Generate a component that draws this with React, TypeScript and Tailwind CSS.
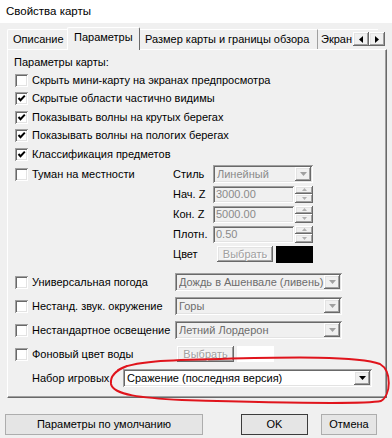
import React from 'react';

const sunken =
  'shadow-[inset_1px_1px_0_#a0a0a0,inset_-1px_-1px_0_#ffffff,inset_2px_2px_0_#696969,inset_-2px_-2px_0_#e3e3e3]';
const raised =
  'shadow-[inset_-1px_-1px_0_#696969,inset_1px_1px_0_#ffffff,inset_-2px_-2px_0_#a0a0a0,inset_2px_2px_0_#e3e3e3]';

function Check({ checked }: { checked?: boolean }) {
  return (
    <div className={`w-[13px] h-[13px] shrink-0 bg-white flex items-center justify-center ${sunken}`}>
      {checked && (
        <svg width="13" height="13" viewBox="0 0 13 13">
          <path d="M3.5 6 L5.5 8.2 L9.8 3.6" fill="none" stroke="#000" strokeWidth="2" />
        </svg>
      )}
    </div>
  );
}

function CheckRow({ label, checked, h }: { label: string; checked?: boolean; h: string }) {
  return (
    <div className={`flex items-center gap-[4px] ${h}`}>
      <Check checked={checked} />
      <span className="whitespace-nowrap">{label}</span>
    </div>
  );
}

function Arrow({ dir = 'down', color = '#a0a0a0' }: { dir?: 'down' | 'up' | 'left' | 'right'; color?: string }) {
  const pts = {
    down: '0,0 7,0 3.5,4',
    up: '0,4 7,4 3.5,0',
    left: '4,0 4,7 0,3.5',
    right: '0,0 0,7 4,3.5',
  }[dir];
  const vertical = dir === 'down' || dir === 'up';
  return (
    <svg width={vertical ? 7 : 4} height={vertical ? 4 : 7} viewBox={vertical ? '0 0 7 4' : '0 0 4 7'}>
      <polygon points={pts} fill={color} />
    </svg>
  );
}

function Combo({ text, className, enabled }: { text: string; className: string; enabled?: boolean }) {
  return (
    <div
      className={`flex items-center h-[18px] pl-[4px] pr-[2px] ${enabled ? 'bg-white text-black' : 'bg-[#f0f0f0] text-[#6d6d6d]'} ${sunken} ${className}`}
    >
      <span className="flex-1 whitespace-nowrap overflow-hidden">{text}</span>
      <div className={`w-[16px] h-[14px] bg-[#f0f0f0] flex items-center justify-center ${raised}`}>
        <Arrow color={enabled ? '#000' : '#a0a0a0'} />
      </div>
    </div>
  );
}

function SpinField({ value }: { value: string }) {
  return (
    <div className="flex items-center">
      <div className={`w-[81px] h-[17px] flex items-center pl-[3px] text-[#8a8a8a] ${sunken}`}>{value}</div>
      <div className="ml-[1px] w-[18px] h-[17px] flex flex-col">
        <div className={`h-[8.5px] flex items-center justify-center ${raised}`}>
          <svg width="5" height="3" viewBox="0 0 5 3">
            <polygon points="0,3 5,3 2.5,0" fill="#b0b0b0" />
          </svg>
        </div>
        <div className={`h-[8.5px] flex items-center justify-center ${raised}`}>
          <svg width="5" height="3" viewBox="0 0 5 3">
            <polygon points="0,0 5,0 2.5,3" fill="#b0b0b0" />
          </svg>
        </div>
      </div>
    </div>
  );
}

function DisabledButton({ className }: { className: string }) {
  return (
    <div
      className={`h-[16px] flex items-center justify-center text-[#a0a0a0] [text-shadow:1px_1px_0_#ffffff] ${raised} ${className}`}
    >
      Выбрать
    </div>
  );
}

function Button({ label, className, def }: { label: string; className: string; def?: boolean }) {
  return (
    <div
      className={`h-[21px] flex items-center justify-center bg-[#e5e5e5] ${def ? 'border border-[#3c3c3c]' : 'border border-[#adadad]'} ${className}`}
    >
      {label}
    </div>
  );
}

const fogRows = [
  { label: 'Стиль', kind: 'combo' },
  { label: 'Нач. Z', kind: 'spin', value: '3000.00' },
  { label: 'Кон. Z', kind: 'spin', value: '5000.00' },
  { label: 'Плотн.', kind: 'spin', value: '0.50' },
  { label: 'Цвет', kind: 'color' },
];

const optionRows = [
  { label: 'Универсальная погода', control: 'Дождь в Ашенвале (ливень)' },
  { label: 'Нестанд. звук. окружение', control: 'Горы' },
  { label: 'Нестандартное освещение', control: 'Летний Лордерон' },
];

export default function App() {
  return (
    <div className="relative w-[392px] h-[438px] overflow-hidden bg-[#f0f0f0] text-[11px] leading-none text-black font-['Liberation_Sans',Arial,sans-serif]">
      {/* Title */}
      <div className="h-[23px] bg-white flex items-center pl-[6px] text-[11.5px]">Свойства карты</div>

      {/* Tabs */}
      <div className="relative pl-[7px] pt-[4px] flex items-end h-[26px] whitespace-nowrap">
        <div className="w-[61px] h-[20px] flex items-center pl-[5px] border-l border-t border-white border-r border-r-[#a0a0a0] rounded-tl-[2px]">
          Описание
        </div>
        <div className="relative z-10 -mb-px -ml-[1px] w-[73px] h-[23px] pb-[3px] flex items-center pl-[6px] bg-[#f0f0f0] border-l border-t border-white border-r border-r-[#696969] rounded-t-[2px]">
          Параметры
        </div>
        <div className="w-[178px] h-[20px] flex items-center pl-[5px] border-t border-white border-r border-r-[#a0a0a0]">
          Размер карты и границы обзора
        </div>
        <div className="w-[60px] h-[20px] flex items-center pl-[3px] border-t border-white">
          Экран
        </div>
        <div className="absolute left-[353px] top-[9px] flex">
          <div className={`w-[16px] h-[14px] bg-[#f0f0f0] flex items-center justify-center ${raised}`}>
            <Arrow dir="left" color="#000" />
          </div>
          <div className={`w-[16px] h-[14px] bg-[#f0f0f0] flex items-center justify-center ${raised}`}>
            <Arrow dir="right" color="#000" />
          </div>
        </div>
      </div>

      {/* Panel */}
      <div className="ml-[7px] w-[380px] h-[349px] border-l border-t border-white border-r border-b border-r-[#696969] border-b-[#696969] shadow-[inset_-1px_-1px_0_#a0a0a0] pl-[7px]">
        <div className="mt-[4px] h-[17px] flex items-center -ml-[1px]">Параметры карты:</div>
        <CheckRow h="h-[18px]" label="Скрыть мини-карту на экранах предпросмотра" />
        <CheckRow h="h-[19px]" checked label="Скрытые области частично видимы" />
        <CheckRow h="h-[18px]" checked label="Показывать волны на крутых берегах" />
        <CheckRow h="h-[19px]" checked label="Показывать волны на пологих берегах" />
        <CheckRow h="h-[19px]" checked label="Классификация предметов" />

        {/* Fog */}
        <div className="flex">
          <div className="w-[158px] h-[20px] flex items-center gap-[4px]">
            <Check />
            <span>Туман на местности</span>
          </div>
          <div className="flex flex-col">
            {fogRows.map((r) => (
              <div key={r.label} className="h-[20px] flex items-center">
                <span className="w-[40px]">{r.label}</span>
                {r.kind === 'combo' && <Combo text="Линейный" className="w-[100px] text-[#8a8a8a]" />}
                {r.kind === 'spin' && <SpinField value={r.value!} />}
                {r.kind === 'color' && (
                  <div className="flex items-center">
                    <DisabledButton className="ml-[4px] w-[56px]" />
                    <div className="ml-[3px] w-[37px] h-[17px] bg-black" />
                  </div>
                )}
              </div>
            ))}
          </div>
        </div>

        <div className="mt-[6px] flex flex-col">
          {optionRows.map((r) => (
            <div key={r.label} className="h-[24px] flex items-center">
              <div className="w-[160px] flex items-center gap-[4px]">
                <Check />
                <span className="whitespace-nowrap">{r.label}</span>
              </div>
              <Combo text={r.control} className="w-[167px]" />
            </div>
          ))}
          <div className="h-[24px] flex items-center">
            <div className="w-[162px] flex items-center gap-[4px]">
              <Check />
              <span>Фоновый цвет воды</span>
            </div>
            <DisabledButton className="w-[57px]" />
            <div className="ml-[3px] w-[37px] h-[16px] bg-white" />
          </div>
          <div className="h-[24px] flex items-center">
            <span className="w-[108px] pl-[17px] whitespace-nowrap">Набор игровых</span>
            <Combo enabled text="Сражение (последняя версия)" className="w-[249px]" />
          </div>
        </div>
      </div>

      {/* Buttons */}
      <div className="mt-[16px] pl-[5px] flex">
        <Button label="Параметры по умолчанию" className="w-[198px]" />
        <Button def label="OK" className="ml-[38px] w-[67px]" />
        <Button label="Отмена" className="ml-[13px] w-[56px]" />
      </div>

      {/* Red hand-drawn marking */}
      <svg className="absolute inset-0 pointer-events-none" width="392" height="438" viewBox="0 0 392 438">
        <path
          d="M118 370 C132 361, 170 360, 220 359 C290 357, 358 356, 380 364 C392 371, 391 395, 381 401 C362 405, 250 402, 182 400 C142 398, 113 395, 111 384 C110 377, 114 371, 127 366"
          fill="none"
          stroke="#e0141c"
          strokeWidth="2"
          strokeLinecap="round"
        />
      </svg>
    </div>
  );
}
